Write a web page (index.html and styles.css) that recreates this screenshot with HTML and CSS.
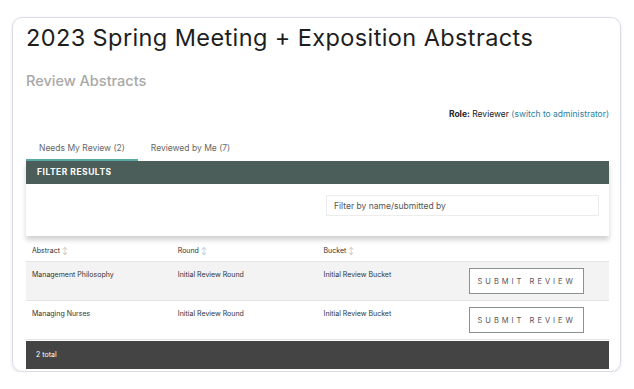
FILE: index.html
```html
<!DOCTYPE html>
<html lang="en">

<head>
    <meta charset="UTF-8">
    <title>Review Abstracts</title>
    <link rel="stylesheet" href="styles.css">
</head>

<body>
    <section class="card">
        <h1 class="pagetitle">2023 Spring Meeting + Exposition Abstracts</h1>
        <h2 class="subtitle">Review Abstracts</h2>
        <p class="role"><b>Role:</b> Reviewer <a href="#">(switch to administrator)</a></p>

        <div class="tabs">
            <span class="tab active">Needs My Review (2)</span>
            <span class="tab">Reviewed by Me (7)</span>
        </div>

        <div class="filter">
            <div class="filterhead">FILTER RESULTS</div>
            <div class="filterbody">
                <input type="text" placeholder="Filter by name/submitted by">
            </div>
        </div>

        <div class="table">
            <div class="row head">
                <span>Abstract <i class="sort">&#8597;</i></span>
                <span>Round <i class="sort">&#8597;</i></span>
                <span>Bucket <i class="sort">&#8597;</i></span>
                <span></span>
            </div>
            <div class="row odd">
                <span>Management Philosophy</span>
                <span>Initial Review Round</span>
                <span>Initial Review Bucket</span>
                <span><button>SUBMIT REVIEW</button></span>
            </div>
            <div class="row">
                <span>Managing Nurses</span>
                <span>Initial Review Round</span>
                <span>Initial Review Bucket</span>
                <span><button>SUBMIT REVIEW</button></span>
            </div>
            <div class="total">2 total</div>
        </div>
    </section>
</body>

</html>
```

FILE: styles.css
```css
body {
    margin: 0;
    background-color: white;
    font-family: 'Inter', 'Open Sans', sans-serif;
    color: #222;
}

.card {
    margin: 17px 13px 0 12px;
    height: 355px;
    box-sizing: border-box;
    border: 1px solid #dcdce6;
    border-radius: 10px;
    box-shadow: 0 1px 3px rgba(0, 0, 0, 0.12);
    padding: 0 11px 0 13px;
    overflow: hidden;
}

.pagetitle {
    font-size: 23.5px;
    font-weight: 400;
    letter-spacing: 0.4px;
    margin: 5px 0 0;
    line-height: 30px;
    color: #1e1e1e;
}

.subtitle {
    font-size: 14.5px;
    font-weight: 500;
    color: #a8a8a8;
    margin: 18px 0 0;
    line-height: 20px;
}

.role {
    text-align: right;
    font-size: 8.5px;
    margin: 16px 0 0;
    line-height: 14px;
}

.role a {
    color: #2d7f9c;
    text-decoration: none;
}

.tabs {
    display: flex;
    margin-top: 20px;
}

.tab {
    font-size: 8.5px;
    color: #666;
    padding: 0 13px 4px 13px;
    line-height: 14px;
    border-bottom: 2px solid transparent;
}

.tab.active {
    border-bottom-color: #5aa9a3;
}

.filter {
    box-shadow: 0 4px 5px rgba(0, 0, 0, 0.18);
}

.filterhead {
    background-color: #4b5e5a;
    color: white;
    font-size: 8.5px;
    font-weight: 700;
    letter-spacing: 0.5px;
    height: 23px;
    line-height: 23px;
    padding-left: 11px;
}

.filterbody {
    display: flex;
    justify-content: flex-end;
    padding: 11px 10px 20px;
}

.filterbody input {
    width: 273px;
    height: 21px;
    box-sizing: border-box;
    border: 1px solid #ececec;
    font-family: inherit;
    font-size: 8.5px;
    padding: 0 7px;
}

.filterbody input::placeholder {
    color: #555;
}

.table {
    margin-top: 4px;
}

.row {
    display: grid;
    grid-template-columns: repeat(4, 1fr);
    font-size: 7px;
    color: #333;
    border-bottom: 1px solid #e4e4e4;
    height: 39px;
    box-sizing: border-box;
}

.row span {
    padding: 8px 6px 0;
}

.row.head {
    height: 22px;
    align-items: center;
}

.row.head span {
    padding-top: 0;
}

.row.odd {
    background-color: #f3f3f3;
}

.sort {
    font-style: normal;
    color: #bbb;
    font-size: 7px;
}

button {
    width: 115px;
    height: 26px;
    margin-top: -2px;
    padding: 0;
    white-space: nowrap;
    background: white;
    border: 1px solid #8a9290;
    color: #555;
    font-family: inherit;
    font-size: 7.5px;
    letter-spacing: 3px;
}

.total {
    background-color: #444;
    color: white;
    font-size: 7px;
    height: 28px;
    line-height: 28px;
    padding-left: 10px;
    margin-top: 1px;
}
```
